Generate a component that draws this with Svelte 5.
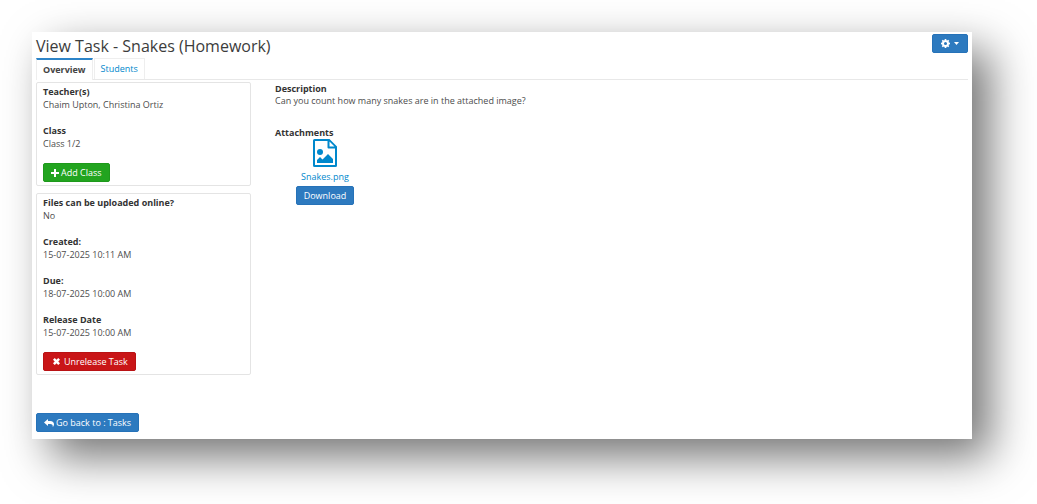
<script>
    const title = 'View Task - Snakes (Homework)';
    const tabs = ['Overview', 'Students'];
    let activeTab = $state('Overview');

    const people = [
        { label: 'Teacher(s)', value: 'Chaim Upton, Christina Ortiz' },
        { label: 'Class', value: 'Class 1/2' }
    ];

    const details = [
        { label: 'Files can be uploaded online?', value: 'No' },
        { label: 'Created:', value: '15-07-2025 10:11 AM' },
        { label: 'Due:', value: '18-07-2025 10:00 AM' },
        { label: 'Release Date', value: '15-07-2025 10:00 AM' }
    ];
</script>

<main class="window">
    <header>
        <h1>{title}</h1>
        <button class="btn settings" aria-label="Settings">
            <svg width="9" height="9" viewBox="0 0 16 16" aria-hidden="true">
                <path fill="#fff" fill-rule="evenodd" d="M6.7 0h2.6l.4 2 1.3.5L12.700 1.400l1.900 1.900L13.500 5l.5 1.300 2 .4v2.600l-2 .4-.5 1.300 1.100 1.700-1.900 1.900L11 13.500l-1.300.5-.4 2H6.700l-.4-2L5 13.500l-1.700 1.100-1.900-1.900L2.500 11 2 9.700l-2-.4V6.700l2-.4L2.500 5 1.400 3.300l1.900-1.900L5 2.500 6.300 2zM8 5.300a2.700 2.700 0 1 0 0 5.400 2.700 2.700 0 0 0 0-5.400z" />
            </svg>
            <svg width="5" height="3" viewBox="0 0 5 3" aria-hidden="true">
                <path fill="#fff" d="M0 0h5L2.500 3z" />
            </svg>
        </button>
    </header>

    <nav>
        {#each tabs as tab}
            <button class="tab" class:active={activeTab === tab} onclick={() => (activeTab = tab)}>{tab}</button>
        {/each}
    </nav>

    <div class="content">
        <aside>
            <section class="card">
                <dl>
                    {#each people as item}
                        <dt>{item.label}</dt>
                        <dd>{item.value}</dd>
                    {/each}
                </dl>
                <button class="btn green">
                    <svg width="8" height="8" viewBox="0 0 8 8" aria-hidden="true">
                        <path fill="#fff" d="M3 0h2v3h3v2H5v3H3V5H0V3h3z" />
                    </svg>
                    Add Class
                </button>
            </section>

            <section class="card">
                <dl>
                    {#each details as item}
                        <dt>{item.label}</dt>
                        <dd>{item.value}</dd>
                    {/each}
                </dl>
                <button class="btn red">
                    <svg width="7" height="7" viewBox="0 0 14 14" aria-hidden="true">
                        <path fill="#fff" d="M3.500 0 7 3.500 10.500 0 14 3.500 10.500 7 14 10.500 10.500 14 7 10.500 3.500 14 0 10.500 3.500 7 0 3.500z" />
                    </svg>
                    Unrelease Task
                </button>
            </section>
        </aside>

        <article>
            <h2>Description</h2>
            <p>Can you count how many snakes are in the attached image?</p>

            <h2>Attachments</h2>
            <div class="attachment">
                <a href="#snakes">
                    <svg width="24" height="28" viewBox="0 0 24 28" aria-hidden="true">
                        <path fill="#0088cc" fill-rule="evenodd" d="M1.500 0H16.500L24 7.500V26.500Q24 28 22.500 28H1.500Q0 28 0 26.500V1.500Q0 0 1.500 0zM2 2V26H22V9.500H15.500Q14.500 9.500 14.500 8.500V2zM16.500 2.500V7.500H21.500z" />
                        <circle cx="7" cy="13" r="3" fill="#0088cc" />
                        <path fill="#0088cc" d="M4 24V21l3-3 2.500 2.500L15 15l5 5v4z" />
                    </svg>
                    Snakes.png
                </a>
                <button class="btn">Download</button>
            </div>
        </article>
    </div>

    <footer>
        <button class="btn">
            <svg width="10" height="8" viewBox="0 0 20 16" aria-hidden="true">
                <path fill="#fff" d="M8 0v4h4c5.500 0 8 2.500 8 6.500 0 2-1 4-2.500 5.500.5-4-1-6-5.500-6H8v4L0 7z" />
            </svg>
            Go back to : Tasks
        </button>
    </footer>
</main>

<style>
    :global(body) {
        margin: 0;
        background: #fff;
    }

    :global(#app) {
        display: flow-root;
    }

    .window {
        margin: 32px 65px 65px 32px;
        padding: 2px 4px 7px;
        background: #fff;
        box-shadow: 18px 18px 42px rgba(0, 0, 0, 0.55);
        font: 9px/13px 'Open Sans', sans-serif;
        color: #4c4c4c;
    }

    header {
        display: flex;
        justify-content: space-between;
        align-items: flex-start;
    }

    h1 {
        margin: 0;
        font-size: 16px;
        font-weight: 400;
        line-height: 24px;
        color: #3c3c3c;
    }

    .btn {
        display: flex;
        align-items: center;
        justify-content: center;
        gap: 2px;
        height: 19px;
        padding: 0 7px;
        border: 1px solid #2672b8;
        border-radius: 2px;
        background: #2d7abf;
        color: #fff;
        font: inherit;
        cursor: pointer;
    }

    .settings {
        gap: 4px;
        width: 36px;
    }

    .green {
        background: #22a41f;
        border-color: #1e991b;
    }

    .red {
        gap: 4px;
        padding-left: 9px;
        background: #c91517;
        border-color: #b91214;
    }

    nav {
        display: flex;
        gap: 1px;
        border-bottom: 1px solid #e8e8e8;
    }

    .tab {
        height: 21px;
        padding: 0 6px 2px;
        border: 1px solid #eee;
        border-bottom: 0;
        background: #fff;
        color: #0088cc;
        font: inherit;
        cursor: pointer;
    }

    .tab.active {
        margin-bottom: -1px;
        height: 22px;
        border-top: 2px solid #2d84c8;
        color: #444;
        font-weight: 700;
    }

    .content {
        display: flex;
        gap: 24px;
        padding-top: 2px;
    }

    aside {
        display: flex;
        flex-direction: column;
        flex: 0 0 215px;
        gap: 7px;
    }

    .card {
        padding: 2px 6px 3px;
        border: 1px solid #e4e4e4;
        border-radius: 2px;
    }

    dl,
    dd,
    p,
    h2 {
        margin: 0;
    }

    dt,
    h2 {
        font-size: 9px;
        font-weight: 700;
        color: #333;
    }

    dd {
        margin-bottom: 13px;
    }

    article {
        flex: 1;
        padding-top: 1px;
    }

    article h2,
    article p {
        line-height: 12px;
    }

    article p {
        margin-bottom: 20px;
    }

    .attachment {
        display: flex;
        flex-direction: column;
        align-items: center;
        gap: 3px;
        width: 100px;
    }

    .attachment a {
        display: flex;
        flex-direction: column;
        align-items: center;
        gap: 3px;
        color: #0088cc;
        text-decoration: none;
    }

    footer {
        padding-top: 38px;
    }
</style>
